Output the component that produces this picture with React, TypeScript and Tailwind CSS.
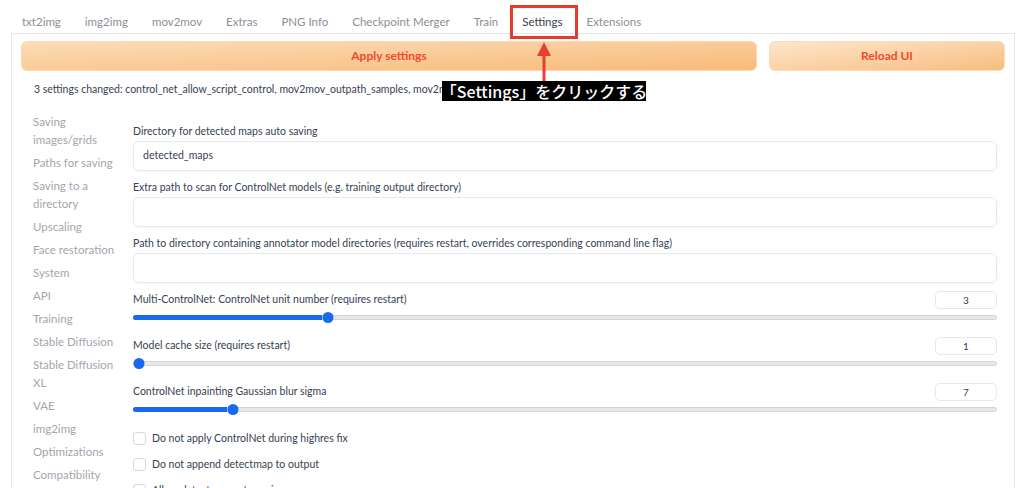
import React from "react";

const tabs = ["txt2img", "img2img", "mov2mov", "Extras", "PNG Info", "Checkpoint Merger", "Train", "Settings", "Extensions"];

const sideItems: string[][] = [
  ["Saving", "images/grids"],
  ["Paths for saving"],
  ["Saving to a", "directory"],
  ["Upscaling"],
  ["Face restoration"],
  ["System"],
  ["API"],
  ["Training"],
  ["Stable Diffusion"],
  ["Stable Diffusion", "XL"],
  ["VAE"],
  ["img2img"],
  ["Optimizations"],
  ["Compatibility"],
  ["Interrogate"],
];

const textFields = [
  { label: "Directory for detected maps auto saving", value: "detected_maps" },
  { label: "Extra path to scan for ControlNet models (e.g. training output directory)", value: "" },
  { label: "Path to directory containing annotator model directories (requires restart, overrides corresponding command line flag)", value: "" },
];

const sliders = [
  { label: "Multi-ControlNet: ControlNet unit number (requires restart)", value: "3", pct: 21.9 },
  { label: "Model cache size (requires restart)", value: "1", pct: 0 },
  { label: "ControlNet inpainting Gaussian blur sigma", value: "7", pct: 10.9 },
];

const checks = [
  "Do not apply ControlNet during highres fix",
  "Do not append detectmap to output",
  "Allow detectmap auto saving",
];

function Slider({ pct }: { pct: number }) {
  return (
    <div className="relative h-[10px] w-full flex items-center">
      <div className="h-[5px] w-full rounded-full bg-[#e8e8e8] border border-[#d4d4d4]" />
      <div className="absolute left-0 h-[5px] rounded-l-full bg-[#1769f0]" style={{ width: `${pct}%` }} />
      <div
        className="absolute h-[11px] w-[11px] rounded-full bg-[#1769f0] -translate-x-1/2"
        style={{ left: `calc(${pct}% + 6px)` }}
      />
    </div>
  );
}

export default function App() {
  const font = { fontFamily: "Lato, 'Noto Sans', sans-serif" };
  return (
    <div className="relative w-[1024px] h-[488px] overflow-hidden bg-white" style={font}>
      {/* tabs */}
      <div className="flex h-[33px] pl-[10px]">
        {tabs.map((t) => (
          <div
            key={t}
            className={`px-[12px] pt-[12px] leading-[20px] text-[11.5px] whitespace-nowrap ${t === "Settings" ? "text-[#374151]" : "text-[#8b8f96]"}`}
          >
            {t}
          </div>
        ))}
      </div>

      {/* panel */}
      <div className="ml-[11px] w-[1004px] h-[470px] border border-[#e7e7ea] px-[9px] pt-[7px]">
        <div className="flex gap-[12px] h-[30px]">
          <div className="flex-1 flex items-center justify-center rounded-[6px] border border-[#fcd9b3] bg-gradient-to-br from-[#fcdcb7] to-[#f7ba78] text-[12px] font-bold text-[#ef4a2f]">
            Apply settings
          </div>
          <div className="w-[236px] flex items-center justify-center rounded-[6px] border border-[#fcdcb9] bg-gradient-to-br from-[#fde6cc] to-[#f7bd7e] text-[12px] font-bold text-[#ef4a2f]">
            Reload UI
          </div>
        </div>
        <div className="mt-[10px] pl-[13px] leading-[16px] text-[10.5px] text-[#374151] whitespace-nowrap">
          3 settings changed: control_net_allow_script_control, mov2mov_outpath_samples, mov2mov_output_dir
        </div>

        <div className="flex mt-[16px] pl-[12px] pr-[8px]">
          <div className="w-[86px] mr-[14px] flex flex-col gap-[5px] text-[11.5px] leading-[18px] text-[#a2a6ad]">
            {sideItems.map((s, i) => (
              <div key={i}>
                {s.map((line) => (
                  <div key={line} className="whitespace-nowrap">
                    {line}
                  </div>
                ))}
              </div>
            ))}
          </div>
          <div className="flex-1 pt-[10px] flex flex-col">
            {textFields.map((f, i) => (
              <div key={f.label} className={i === 2 ? "mb-[6px]" : "mb-[8px]"}>
                <div className="text-[10.5px] leading-[16px] text-[#374151] whitespace-nowrap">{f.label}</div>
                <div className="mt-[2px] h-[30px] rounded-[6px] border border-[#e8e8ec] shadow-[0_1px_2px_rgba(0,0,0,0.04)] flex items-center px-[9px] text-[10.5px] text-[#374151]">
                  {f.value}
                </div>
              </div>
            ))}
            {sliders.map((s) => (
              <div key={s.label} className="mb-[13px]">
                <div className="flex items-center justify-between h-[20px]">
                  <div className="text-[10.5px] leading-[16px] text-[#374151]">{s.label}</div>
                  <div className="w-[62px] h-[18px] mt-[2px] rounded-[5px] border border-[#e8e8ec] flex items-center justify-center text-[10px] text-[#374151]">
                    {s.value}
                  </div>
                </div>
                <div className="mt-[3px]">
                  <Slider pct={s.pct} />
                </div>
              </div>
            ))}
            <div className="flex flex-col gap-[10px] pt-[3px]">
              {checks.map((c) => (
                <div key={c} className="flex items-center gap-[6px] h-[16px]">
                  <div className="w-[13px] h-[13px] rounded-[3px] border border-[#d6d8dc] bg-white" />
                  <div className="text-[10.5px] leading-[16px] text-[#374151]">{c}</div>
                </div>
              ))}
            </div>
          </div>
        </div>
      </div>

      {/* annotation: red box */}
      <div className="absolute left-[510px] top-[5px] w-[68px] h-[34px] border-[3px] border-[#e53a2c]" />
      {/* arrow */}
      <svg className="absolute left-[536px] top-[41px]" width="16" height="42" viewBox="0 0 16 42">
        <polygon points="8,1 15,15 1,15" fill="#e8402f" />
        <rect x="6.5" y="14" width="3" height="28" fill="#e8402f" />
      </svg>
      {/* label */}
      <div
        className="absolute left-[442px] top-[81px] w-[204px] h-[20px] bg-black text-white text-[16px] leading-[20px] font-medium flex items-center justify-center whitespace-nowrap"
        style={{ fontFamily: "'Noto Sans CJK JP', sans-serif" }}
      >
        「Settings」をクリックする
      </div>
    </div>
  );
}
